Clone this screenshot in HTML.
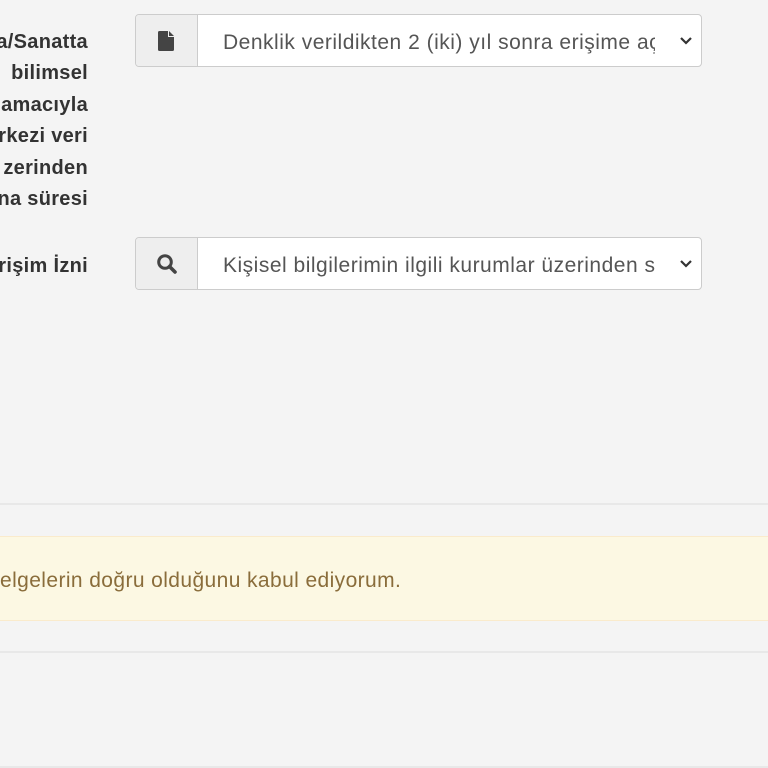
<!DOCTYPE html>
<html><head><meta charset="utf-8"><style>
html,body{margin:0;padding:0;background:#f4f4f4;width:768px;height:768px;overflow:hidden;font-family:"Liberation Sans",Arial,sans-serif;}
.lbl{position:absolute;right:680px;font-weight:bold;font-size:20px;letter-spacing:0.3px;color:#333;white-space:nowrap;text-align:right;}
.ig{position:absolute;left:135px;width:565px;height:51px;border:1px solid #ccc;border-radius:4px;background:#fff;overflow:hidden;}
.ad{position:absolute;left:0;top:0;width:61px;height:51px;background:#eee;border-right:1px solid #ccc;}
.tx{position:absolute;left:87px;top:2px;line-height:51px;font-size:21px;letter-spacing:0.5px;color:#555;width:432px;overflow:hidden;white-space:nowrap;}
.ch{position:absolute;right:8px;top:19px;}
.line{position:absolute;left:0;width:768px;height:2px;background:#e8e8e8;}
.alert{position:absolute;left:0;top:536px;width:768px;height:83px;background:#fcf8e3;border-top:1px solid #faebcc;border-bottom:1px solid #faebcc;}
.alert span{position:absolute;left:0;top:32px;font-size:21px;letter-spacing:0.4px;color:#8a6d3b;}
</style></head><body>
<div class="lbl" style="top:31px">a/Sanatta</div>
<div class="lbl" style="top:62px">bilimsel</div>
<div class="lbl" style="top:94px">amacıyla</div>
<div class="lbl" style="top:125px">rkezi veri</div>
<div class="lbl" style="top:157px">zerinden</div>
<div class="lbl" style="top:188px">na süresi</div>
<div class="lbl" style="top:255px">rişim İzni</div>

<div class="ig" style="top:14px">
<div class="ad"><svg style="position:absolute;left:22px;top:16px" width="17" height="20" viewBox="0 0 17 20"><path d="M0 1.5Q0 0 1.5 0H10V6H16V18.5Q16 20 14.5 20H1.5Q0 20 0 18.5Z M11 0L16 5H11Z" fill="#444"/></svg></div>
<div class="tx">Denklik verildikten 2 (iki) yıl sonra erişime açılsın</div>
<svg class="ch" width="14" height="14" viewBox="0 0 14 14"><path d="M2 4L7 9L12 4" stroke="#333" stroke-width="2.2" fill="none"/></svg>
</div>

<div class="ig" style="top:237px">
<div class="ad"><svg style="position:absolute;left:20px;top:15px" width="22" height="22" viewBox="0 0 22 22"><circle cx="9" cy="9" r="6.3" stroke="#444" stroke-width="3" fill="none"/><path d="M13.5 13.5L19 19" stroke="#444" stroke-width="3.6" stroke-linecap="round"/></svg></div>
<div class="tx">Kişisel bilgilerimin ilgili kurumlar üzerinden sorgulanmasına izin veriyorum</div>
<svg class="ch" width="14" height="14" viewBox="0 0 14 14"><path d="M2 4L7 9L12 4" stroke="#333" stroke-width="2.2" fill="none"/></svg>
</div>

<div class="line" style="top:503px"></div>
<div class="alert"><span>elgelerin doğru olduğunu kabul ediyorum.</span></div>
<div class="line" style="top:651px"></div>
<div class="line" style="top:766px"></div>
</body></html>
